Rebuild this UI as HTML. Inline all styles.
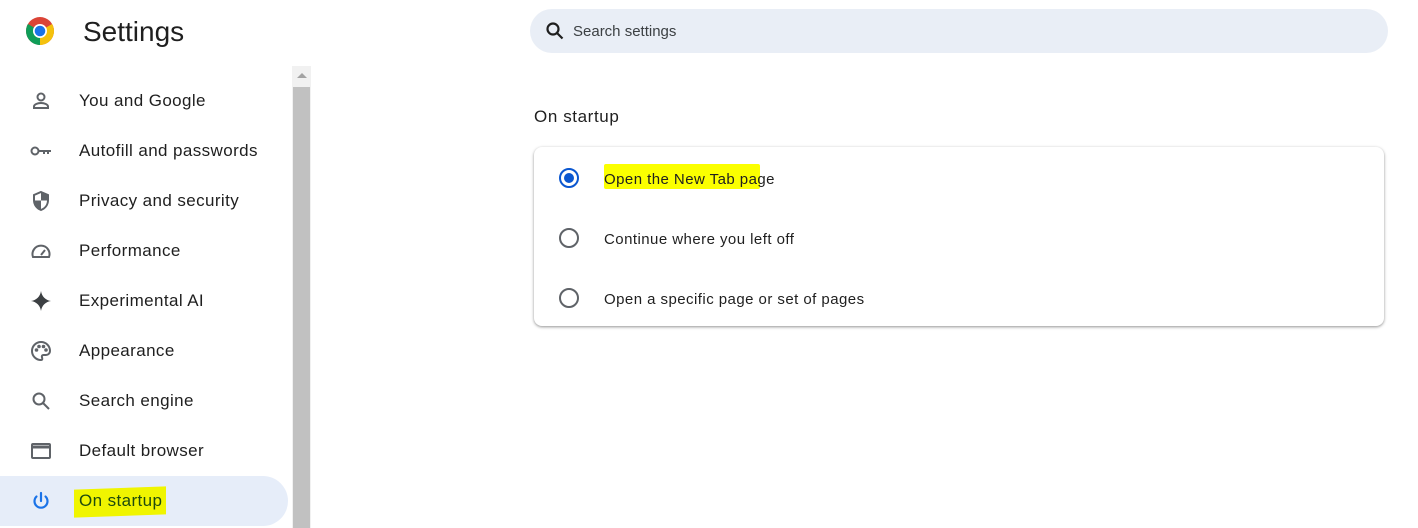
<!DOCTYPE html>
<html><head><style>
body{margin:0;width:1418px;height:528px;overflow:hidden;background:#fff;font-family:"Liberation Sans",sans-serif;color:#1f1f1f;position:relative}
.abs{position:absolute}
.item{position:absolute;left:0;width:288px;height:50px;display:flex;align-items:center}
.item svg{position:absolute;left:29px;top:13px}
.item span{position:absolute;left:79px;top:15px;font-size:17px;letter-spacing:.4px}
.radio{position:absolute;left:559px;width:16px;height:16px;border:2px solid #5f6368;border-radius:50%}
.opt{position:absolute;left:604px;font-size:15px;color:#1f1f1f;letter-spacing:.45px}
</style></head><body>
<svg class="abs" style="left:25px;top:16px" width="30" height="30" viewBox="0 0 30 30">
<circle cx="15" cy="15" r="14" fill="#db4437"/>
<path d="M15 15 L27.1 8 A14 14 0 0 1 15 29 Z" fill="#f4c20d"/>
<path d="M15 15 L15 29 A14 14 0 0 1 2.9 8 Z" fill="#0f9d58"/>
<circle cx="15" cy="15" r="7" fill="#fff"/><circle cx="15" cy="15" r="5.3" fill="#1a73e8"/></svg>
<div class="abs" style="left:83px;top:16px;font-size:28px;">Settings</div>

<div class="abs" style="left:292px;top:66px;width:19px;height:462px;background:#f1f1f1"></div>
<div class="abs" style="left:293px;top:87px;width:17px;height:441px;background:#c1c1c1"></div>
<div class="abs" style="left:297px;top:73px;width:0;height:0;border-left:5px solid transparent;border-right:5px solid transparent;border-bottom:5px solid #a3a3a3"></div>

<div class="item" style="top:76px"><svg width="24" height="24" viewBox="0 0 24 24" fill="none" stroke="#5f6368" stroke-width="2"><circle cx="12" cy="8" r="3.5"/><path d="M5 19v-1.5c0-2 3.5-3.5 7-3.5s7 1.5 7 3.5V19z"/></svg><span>You and Google</span></div>
<div class="item" style="top:126px"><svg width="24" height="24" viewBox="0 0 24 24" fill="none" stroke="#5f6368" stroke-width="2"><circle cx="6" cy="12" r="3.5"/><path d="M9.5 12H22M19 12v3M15 12v3"/></svg><span>Autofill and passwords</span></div>
<div class="item" style="top:176px"><svg width="24" height="24" viewBox="0 0 24 24"><path d="M12 3l7 3v5c0 5-3 8.5-7 10-4-1.5-7-5-7-10V6z" fill="none" stroke="#5f6368" stroke-width="2"/><path d="M12 3l7 3v5.5h-7zM12 11.5H5c0 5 3 8.5 7 10z" fill="#5f6368"/></svg><span>Privacy and security</span></div>
<div class="item" style="top:226px"><svg width="24" height="24" viewBox="0 0 24 24" fill="none" stroke="#5f6368" stroke-width="2"><path d="M4 18a8.5 8.5 0 1 1 16 0z"/><path d="M12 16l4-5"/></svg><span>Performance</span></div>
<div class="item" style="top:276px"><svg width="24" height="24" viewBox="0 0 24 24"><path d="M12 2c.8 5.5 4.5 9.2 10 10-5.5.8-9.2 4.5-10 10-.8-5.5-4.5-9.2-10-10 5.5-.8 9.2-4.5 10-10z" fill="#3c4043"/></svg><span>Experimental AI</span></div>
<div class="item" style="top:326px"><svg width="24" height="24" viewBox="0 0 24 24" fill="none" stroke="#5f6368" stroke-width="2"><path d="M12 3a9 9 0 0 0 0 18c1.5 0 1.5-1.5 1-2.5s0-2.5 1.5-2.5H17a4 4 0 0 0 4-4c0-5-4-9-9-9z"/><circle cx="7.5" cy="11" r=".8" fill="#5f6368"/><circle cx="10" cy="7.5" r=".8" fill="#5f6368"/><circle cx="14.5" cy="7.5" r=".8" fill="#5f6368"/><circle cx="17" cy="11" r=".8" fill="#5f6368"/></svg><span>Appearance</span></div>
<div class="item" style="top:376px"><svg width="24" height="24" viewBox="0 0 24 24" fill="none" stroke="#5f6368" stroke-width="2"><circle cx="10" cy="10" r="5.5"/><path d="M14 14l6 6"/></svg><span>Search engine</span></div>
<div class="item" style="top:426px"><svg width="24" height="24" viewBox="0 0 24 24" fill="none" stroke="#5f6368" stroke-width="2"><rect x="3" y="5" width="18" height="14" rx="1"/><path d="M3 8h18" stroke-width="3"/></svg><span>Default browser</span></div>
<div class="item" style="top:476px;background:#e6edf9;border-radius:0 25px 25px 0"><div class="abs" style="left:74px;top:12px;width:92px;height:28px;background:#f0f500;transform:skewY(-2deg)"></div><svg width="24" height="24" viewBox="0 0 24 24" fill="none" stroke="#1a73e8" stroke-width="2.2" stroke-linecap="round"><path d="M12 4v8"/><path d="M7.5 7.5a6.5 6.5 0 1 0 9 0"/></svg><span style="color:#1e4b0e">On startup</span></div>

<div class="abs" style="left:530px;top:9px;width:858px;height:44px;border-radius:22px;background:#e9eef6"></div>
<svg class="abs" style="left:545px;top:21px" width="20" height="20" viewBox="0 0 20 20" fill="none" stroke="#1f1f1f" stroke-width="2.2"><circle cx="8" cy="8" r="5.5"/><path d="M12 12l5.5 5.5"/></svg>
<div class="abs" style="left:573px;top:23px;font-size:15px;color:#3c4043">Search settings</div>

<div class="abs" style="left:534px;top:107px;font-size:17px;color:#1f1f1f;letter-spacing:.6px">On startup</div>
<div class="abs" style="left:534px;top:147px;width:850px;height:179px;border-radius:8px;background:#fff;box-shadow:0 1px 3px rgba(0,0,0,.3),0 1px 2px rgba(0,0,0,.15)"></div>
<div class="abs" style="left:604px;top:164px;width:156px;height:25px;background:#fbff00;border-radius:2px"></div>
<div class="radio" style="top:168px;border-color:#0b57d0"><div style="position:absolute;left:3px;top:3px;width:10px;height:10px;border-radius:50%;background:#0b57d0"></div></div>
<div class="opt" style="top:171px">Open the New Tab page</div>
<div class="radio" style="top:228px"></div>
<div class="opt" style="top:231px">Continue where you left off</div>
<div class="radio" style="top:288px"></div>
<div class="opt" style="top:291px">Open a specific page or set of pages</div>
</body></html>
